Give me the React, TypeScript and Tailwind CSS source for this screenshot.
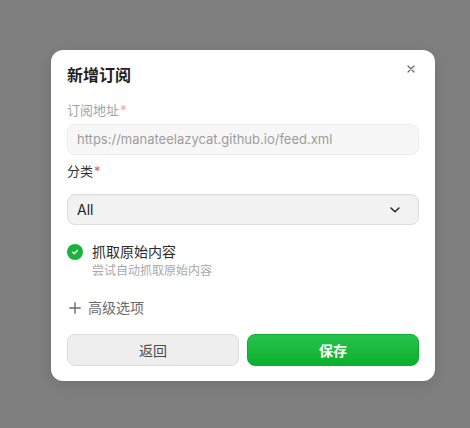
import React from "react";

const font = { fontFamily: '"Inter", "Noto Sans CJK SC", sans-serif' };

function CloseIcon() {
  return (
    <svg width="8" height="8" viewBox="0 0 8 8" className="block">
      <path d="M1 1 L7 7 M7 1 L1 7" stroke="#666" strokeWidth="1.2" strokeLinecap="round" />
    </svg>
  );
}

function ChevronDown() {
  return (
    <svg width="10" height="6" viewBox="0 0 10 6" className="block">
      <path d="M1 1 L5 4.8 L9 1" fill="none" stroke="#222" strokeWidth="1.4" strokeLinecap="round" strokeLinejoin="round" />
    </svg>
  );
}

function CheckCircle() {
  return (
    <span className="flex h-4 w-4 items-center justify-center rounded-full bg-[#18b33c]">
      <svg width="10" height="10" viewBox="0 0 10 10" className="block">
        <path d="M2.6 5.2 L4.3 6.8 L7.4 3.4" fill="none" stroke="#fff" strokeWidth="1.4" strokeLinecap="round" strokeLinejoin="round" />
      </svg>
    </span>
  );
}

function PlusIcon() {
  return (
    <svg width="12" height="12" viewBox="0 0 12 12" className="block">
      <path d="M6 0.8 V11.2 M0.8 6 H11.2" stroke="#6b6b6b" strokeWidth="1.4" strokeLinecap="round" />
    </svg>
  );
}

export default function App() {
  return (
    <div className="h-[428px] w-[470px] overflow-hidden bg-[#7f7f7f] pl-[51px] pt-[50px]" style={font}>
      <div className="w-[384px] rounded-xl bg-white px-4 pb-[15px] shadow-[0_4px_16px_rgba(0,0,0,0.12)]">
        {/* header */}
        <div className="flex items-start justify-between">
          <h2 className="pt-[13px] text-[16px] font-semibold leading-6 text-[#1f1f1f]">新增订阅</h2>
          <button className="mr-[4px] mt-[15px]" aria-label="close">
            <CloseIcon />
          </button>
        </div>

        {/* feed url */}
        <div className="mt-[13px] text-[13px] leading-5 text-[#a3a3a3]">
          订阅地址<span className="ml-[1px] text-[#f3a0b5]">*</span>
        </div>
        <div className="mt-1 flex h-[31px] items-center rounded-lg border border-[#ededed] bg-[#f7f7f7] px-[9px] text-[13px] text-[#9c9c9c]">
          https://manateelazycat.github.io/feed.xml
        </div>

        {/* category */}
        <div className="mt-[6px] text-[13px] leading-5 text-[#333]">
          分类<span className="ml-[1px] text-[#ec4d7d]">*</span>
        </div>
        <div className="mt-[13px] flex h-[31px] items-center justify-between rounded-lg border border-[#dedede] bg-[#f2f2f2] pl-[9px] pr-[18px] text-[14px] text-[#1f1f1f] shadow-[inset_0_1px_2px_rgba(0,0,0,0.04)]">
          <span>All</span>
          <ChevronDown />
        </div>

        {/* fetch original content */}
        <div className="mt-4 flex items-center gap-[9px]">
          <CheckCircle />
          <span className="text-[14px] leading-[22px] text-[#2b2b2b]">抓取原始内容</span>
        </div>
        <div className="pl-[25px] text-[12px] leading-4 text-[#a8a8a8]">尝试自动抓取原始内容</div>

        {/* advanced */}
        <div className="mt-[18px] flex items-center gap-[7px] pl-[2px] text-[14px] leading-[22px] text-[#6b6b6b]">
          <PlusIcon />
          <span>高级选项</span>
        </div>

        {/* actions */}
        <div className="mt-[15px] flex gap-2">
          <button className="flex h-8 flex-1 items-center justify-center rounded-lg border border-[#dcdcdc] bg-[#eeeeee] text-[14px] text-[#4a4a4a]">
            返回
          </button>
          <button className="flex h-8 flex-1 items-center justify-center rounded-lg border border-[#10aa33] bg-gradient-to-b from-[#27c34c] to-[#08b02c] text-[14px] font-semibold text-white">
            保存
          </button>
        </div>
      </div>
    </div>
  );
}
